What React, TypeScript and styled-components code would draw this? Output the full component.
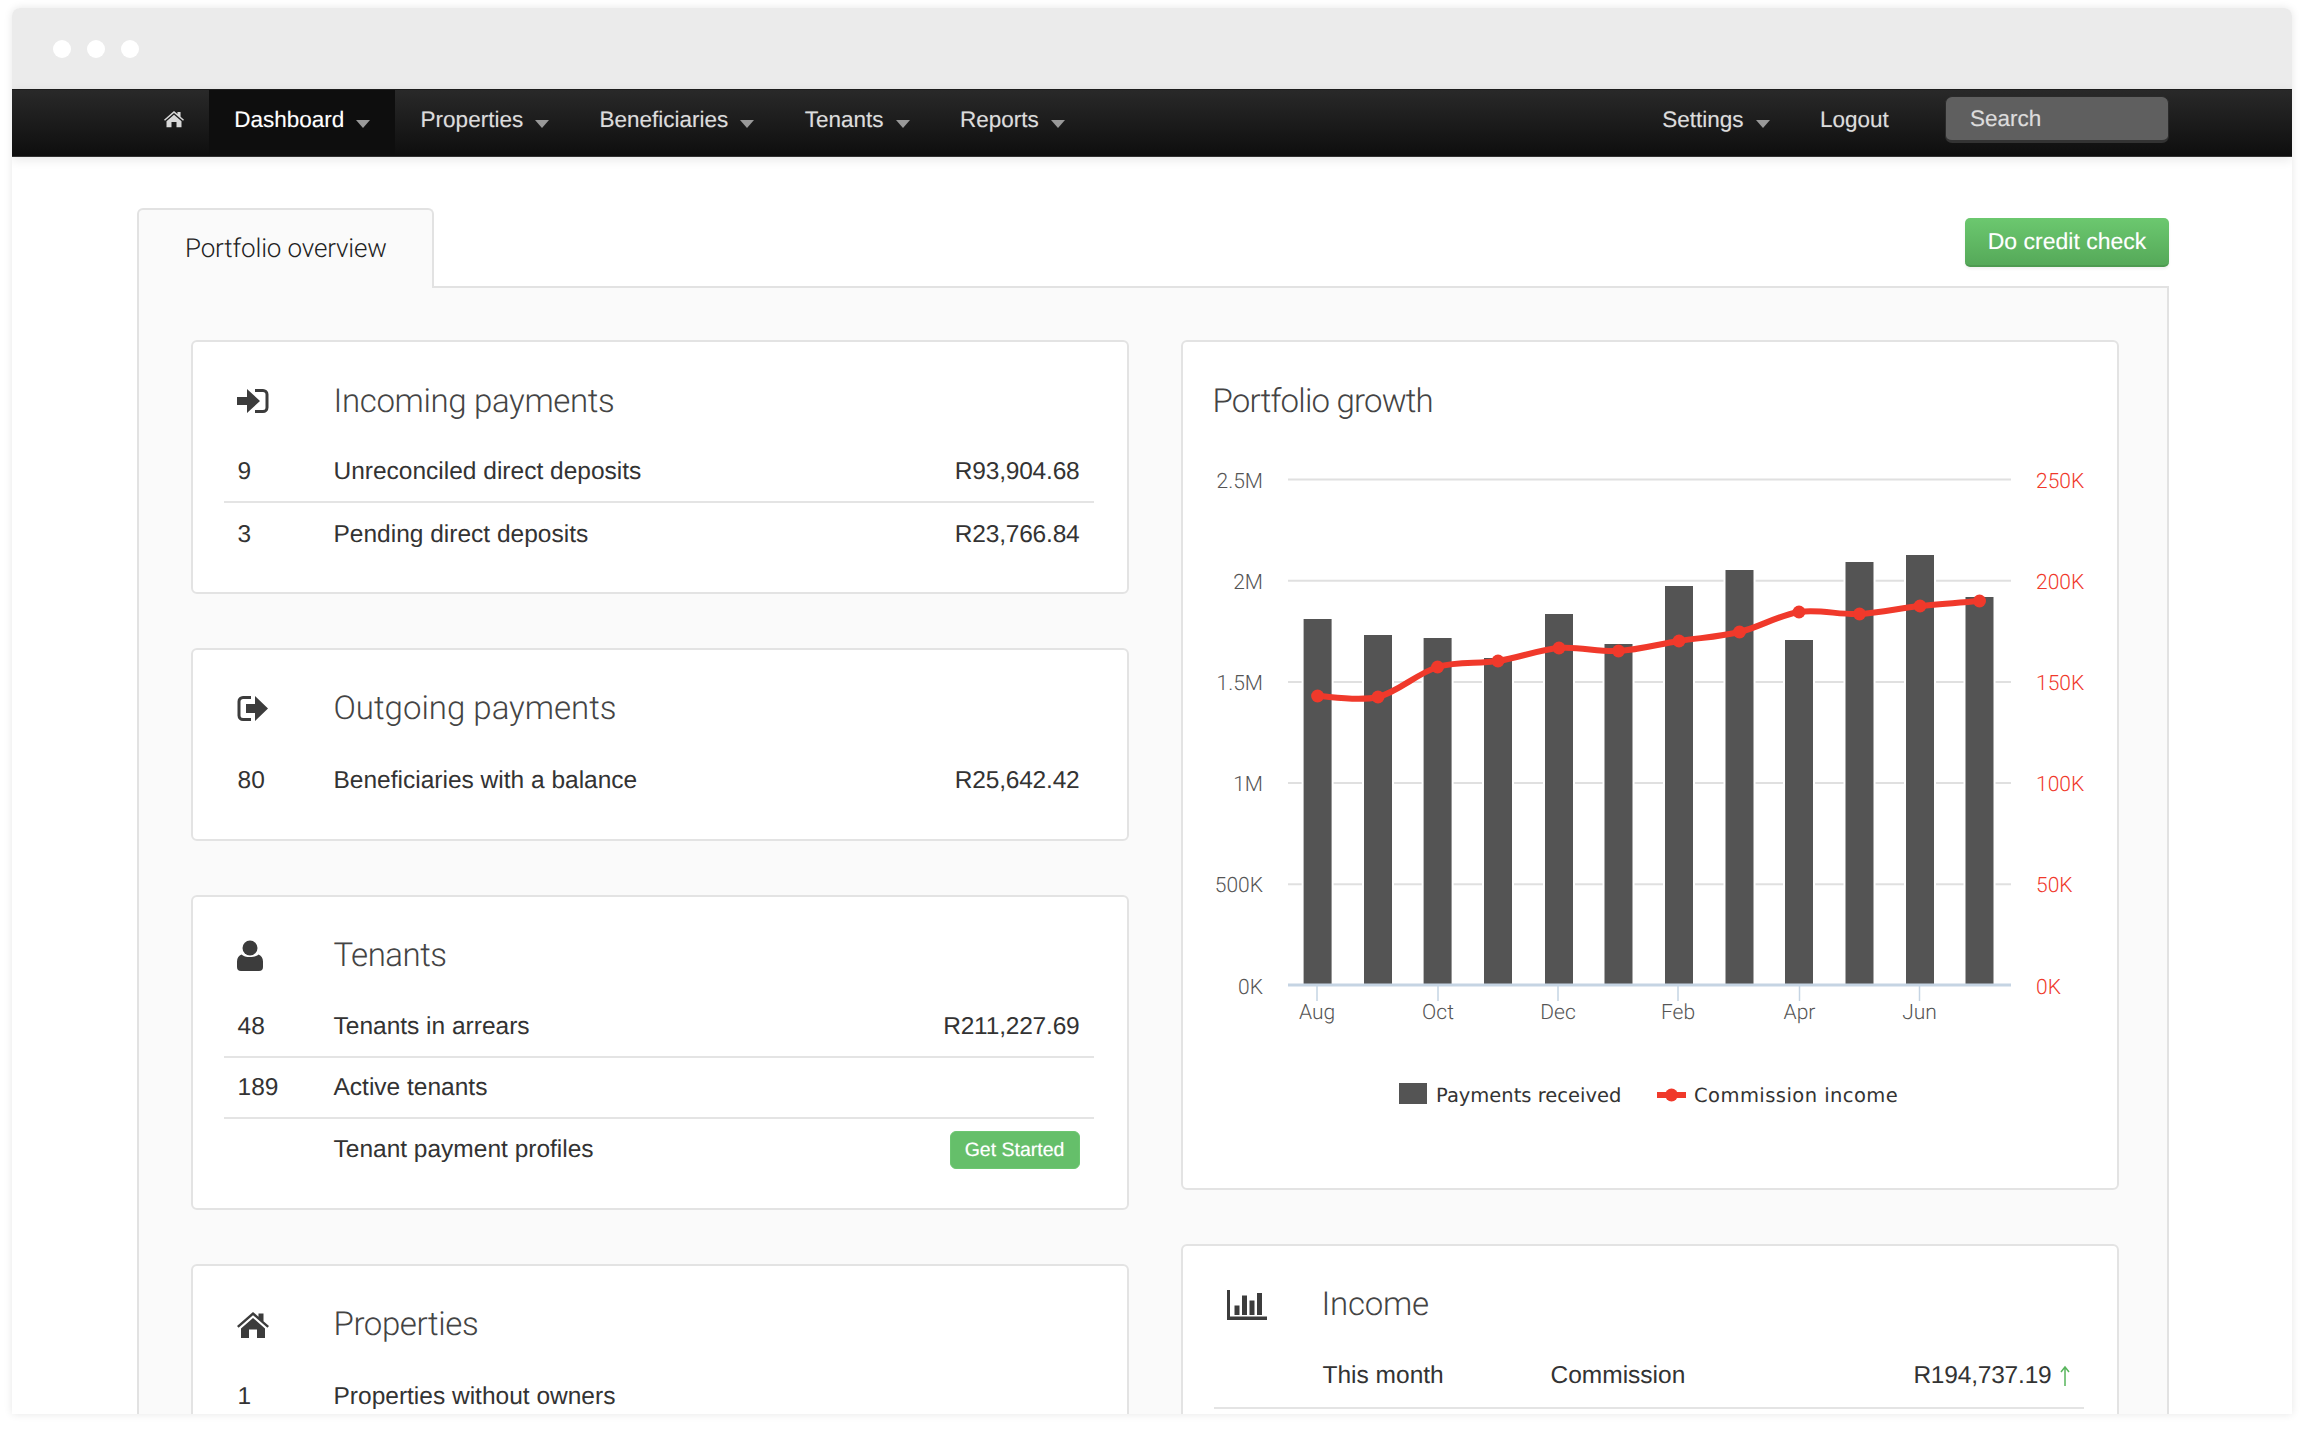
import React from "react";
import styled, { createGlobalStyle } from "styled-components";

const Global = createGlobalStyle`
  html, body { margin: 0; padding: 0; background: #fff; }
  body {
    font-family: "Liberation Sans", Arial, sans-serif;
    color: #333;
    text-rendering: geometricPrecision;
  }
  * { box-sizing: border-box; }
`;

const Page = styled.div`
  width: 2304px;
  height: 1430px;
  padding: 8px 12px 0;
  overflow: hidden;
`;
const Window = styled.div`
  width: 2280px;
  height: 1406px;
  border-radius: 8px 8px 0 0;
  overflow: hidden;
  background: #fff;
  box-shadow: 0 0 9px rgba(0, 0, 0, 0.1);
  display: flex;
  flex-direction: column;
`;
const TitleBar = styled.div`
  height: 81px;
  flex: none;
  background: #ebebeb;
  display: flex;
  align-items: center;
  gap: 16px;
  padding-left: 41px;
`;
const Dot = styled.span`
  width: 18px;
  height: 18px;
  border-radius: 50%;
  background: #fff;
`;
const NavBar = styled.nav`
  height: 68px;
  flex: none;
  display: flex;
  align-items: stretch;
  padding: 0 123px 0 126.6px;
  background: linear-gradient(#292929, #0e0e0e);
  border-top: 1px solid #1c1c1c;
  border-bottom: 1px solid #333;
  box-shadow: 0 3px 10px rgba(0, 0, 0, 0.09);
  position: relative;
  z-index: 2;
`;
const NavItem = styled.a<{ $active?: boolean }>`
  display: flex;
  align-items: center;
  padding: 0 25.2px 7px;
  font-size: 22.5px;
  white-space: nowrap;
  color: ${(p) => (p.$active ? "#fff" : "#dcdcdc")};
  background: ${(p) => (p.$active ? "#0e0e0e" : "transparent")};
  text-shadow: 0 0 1px rgba(255, 255, 255, 0.3);
`;
const Caret = styled.span`
  width: 0;
  height: 0;
  margin: 8px 0 0 12px;
  border-left: 7px solid transparent;
  border-right: 7px solid transparent;
  border-top: 8px solid #999;
`;
const NavSpacer = styled.div`
  flex: 1;
`;
const SearchBox = styled.div`
  width: 224px;
  height: 47px;
  margin: 6px 0 0 31px;
  padding: 0 0 0 24px;
  display: flex;
  align-items: center;
  font-size: 22.5px;
  color: #dcdcdc;
  text-shadow: 0 0 1px rgba(255, 255, 255, 0.3);
  background: #5f5f5f;
  border: 1px solid #2a2a2a;
  border-bottom: 3px solid #333;
  border-radius: 7px;
`;
const Content = styled.main`
  flex: 1;
  display: flex;
  flex-direction: column;
  padding: 0 123px 0 125px;
  min-height: 0;
`;
const TabRow = styled.div`
  flex: none;
  display: flex;
  justify-content: space-between;
  align-items: flex-start;
  padding-top: 51px;
  height: 129px;
`;
const Tab = styled.div`
  width: 297px;
  height: 80px;
  padding-left: 46px;
  display: flex;
  align-items: center;
  font-family: Roboto, "Liberation Sans", sans-serif;
  font-weight: 300;
  font-size: 26px;
  letter-spacing: -0.15px;
  color: #222;
  background: #fafafa;
  border: 2px solid #e2e2e2;
  border-bottom: none;
  border-radius: 6px 6px 0 0;
  position: relative;
  z-index: 1;
`;
const PrimaryButton = styled.button`
  width: 204px;
  height: 49px;
  margin-top: 10px;
  padding: 0 0 1px;
  font: 23px "Liberation Sans", Arial, sans-serif;
  text-rendering: geometricPrecision;
  text-shadow: 0 0 1px rgba(255, 255, 255, 0.3);
  color: #fff;
  background: linear-gradient(#6cc86f, #55a959);
  border: none;
  border-bottom: 2px solid #4d9a50;
  border-radius: 5px;
  box-shadow: 0 2px 3px rgba(0, 0, 0, 0.06);
`;
const Panel = styled.section`
  flex: 1;
  display: grid;
  grid-template-columns: 938px 938px;
  column-gap: 52px;
  align-items: start;
  padding: 52px 0 0 51.5px;
  background: #fafafa;
  border: 2px solid #e2e2e2;
  border-bottom: none;
  min-height: 0;
  overflow: hidden;
`;
const Column = styled.div`
  display: flex;
  flex-direction: column;
  gap: 53.5px;
`;
const Card = styled.article`
  background: #fff;
  border: 2px solid #e3e3e3;
  border-radius: 6px;
  padding: 32px 33px 28px 31px;
`;
const ChartCard = styled(Card)`
  padding: 32px 0 0;
`;
const CardHead = styled.header`
  display: flex;
  align-items: center;
  height: 54px;
  margin-bottom: 14px;
  padding-left: 13px;
`;
const IconSlot = styled.div<{ $width?: number }>`
  width: ${(p) => p.$width ?? 97}px;
  flex: none;
  display: flex;
  align-items: center;
`;
const Heading = styled.h2<{ $tracking?: number }>`
  margin: 0;
  font-family: Roboto, "Liberation Sans", sans-serif;
  font-weight: 300;
  font-size: 33px;
  letter-spacing: ${(p) => p.$tracking ?? -0.25}px;
  color: #444;
`;
const Row = styled.div`
  display: flex;
  align-items: center;
  height: 61.2px;
  padding: 1.5px 14px 0;
  font-size: 24.5px;
  color: #333;
  border-bottom: 2px solid #e4e4e4;
  &:last-child {
    border-bottom: none;
  }
`;
const Count = styled.span`
  width: 96px;
  flex: none;
`;
const Label = styled.span`
  flex: 1;
`;
const Amount = styled.span`
  letter-spacing: -0.2px;
`;
const SmallButton = styled.button`
  width: 130px;
  height: 38px;
  padding: 0;
  font: 19.5px "Liberation Sans", Arial, sans-serif;
  text-rendering: geometricPrecision;
  text-shadow: 0 0 1px rgba(255, 255, 255, 0.5);
  color: #fff;
  background: #65bf6a;
  border: 1px solid #6cc671;
  border-radius: 6px;
`;
const ChartHead = styled(CardHead)`
  padding-left: 30px;
`;
const ChartSvg = styled.svg`
  display: block;
`;
const AxisLabel = styled.text<{ $accent?: boolean }>`
  font-family: Roboto, "Liberation Sans", sans-serif;
  font-weight: 300;
  font-size: 21px;
  fill: ${(p) => (p.$accent ? "#f0392b" : "#555")};
`;
const LegendText = styled.text<{ $spacing?: number }>`
  font-family: "DejaVu Sans", sans-serif;
  font-size: 19.5px;
  letter-spacing: ${(p) => p.$spacing ?? 0}px;
  fill: #333;
`;
const IncomeCard = styled(Card)`
  height: 400px;
`;
const IncomeRow = styled.div`
  display: flex;
  align-items: center;
  height: 63px;
  padding: 0 14px 0 109px;
  font-size: 24.5px;
  color: #333;
  border-bottom: 2px solid #e4e4e4;
`;
const Period = styled.span`
  width: 228px;
  flex: none;
`;
const TrendArrow = styled.svg`
  margin-left: 8px;
`;

const SignIn = () => (
  <svg width="32" height="24" viewBox="0 0 32 24" fill="#3c3c3c">
    <path d="M0 8h10V0l13 12-13 12v-8H0z" />
    <path d="M18 1.5h8a4 4 0 0 1 4 4v13a4 4 0 0 1-4 4h-8" fill="none" stroke="#3c3c3c" strokeWidth="3" />
  </svg>
);
const SignOut = () => (
  <svg width="32" height="25" viewBox="0 0 32 25" fill="#3c3c3c">
    <path d="M14 1.5H6a4 4 0 0 0-4 4v14a4 4 0 0 0 4 4h8" fill="none" stroke="#3c3c3c" strokeWidth="3" />
    <path d="M9 8h9V0l13 12.5L18 25v-8H9z" />
  </svg>
);
const Person = () => (
  <svg width="26" height="31" viewBox="0 0 26 31" fill="#3c3c3c">
    <circle cx="13" cy="8" r="7.5" />
    <path d="M4.5 14.5c3 3.4 14 3.4 17 0 2.5 1 4.5 3.5 4.5 7V27a4 4 0 0 1-4 4H4a4 4 0 0 1-4-4v-5.500c0-3.500 2-6 4.500-7z" />
  </svg>
);
const House = ({ size = 32, color = "#3c3c3c" }: { size?: number; color?: string }) => (
  <svg width={size} height={(size * 26) / 32} viewBox="0 0 32 26" fill={color}>
    <path d="M16 0 21.5 4.8V1.500H26.5V9.2L32 14l-1.600 1.700L16 3.200 1.600 15.700 0 14z" />
    <path d="M16 6 28 16.400V26H20V17.500H12V26H4V16.400z" />
  </svg>
);
const Bars = () => (
  <svg width="40" height="30" viewBox="0 0 40 30" fill="#3c3c3c">
    <path d="M0 0h3v26.500h37V30H0z" />
    <path d="M7.500 15.500h5V25h-5zM15 5.500h5V25h-5zM22.500 10.500h5V25h-5zM30 3h5v22h-5z" />
  </svg>
);

const barX = [1317.6, 1378, 1437.6, 1498, 1559, 1618.5, 1679, 1739.5, 1799, 1859.5, 1920, 1979.5];
const barTop = [619, 635, 638, 658, 614, 644, 586, 570, 640, 562, 555, 597];
const lineY = [696, 697, 667, 661, 648, 651, 641, 632, 612, 614, 606, 601];
const leftTicks = ["2.5M", "2M", "1.5M", "1M", "500K", "0K"];
const rightTicks = ["250K", "200K", "150K", "100K", "50K", "0K"];
const months: [string, number][] = [["Aug", 1317], ["Oct", 1438], ["Dec", 1558], ["Feb", 1678], ["Apr", 1799.5], ["Jun", 1919.5]];
const gridY = (i: number) => 479.5 + i * 101.2;

function spline(xs: number[], ys: number[]): string {
  let d = `M${xs[0]} ${ys[0]}`;
  for (let i = 0; i < xs.length - 1; i++) {
    const x0 = xs[Math.max(i - 1, 0)], y0 = ys[Math.max(i - 1, 0)];
    const x3 = xs[Math.min(i + 2, xs.length - 1)], y3 = ys[Math.min(i + 2, xs.length - 1)];
    const c1x = xs[i] + (xs[i + 1] - x0) / 6, c1y = ys[i] + (ys[i + 1] - y0) / 6;
    const c2x = xs[i + 1] - (x3 - xs[i]) / 6, c2y = ys[i + 1] - (y3 - ys[i]) / 6;
    d += ` C${c1x} ${c1y} ${c2x} ${c2y} ${xs[i + 1]} ${ys[i + 1]}`;
  }
  return d;
}

const GrowthChart = () => (
  <ChartSvg width="934" height="746" viewBox="1183 442 934 746">
    {leftTicks.slice(0, 5).map((_, i) => (
      <line key={i} x1="1288" x2="2011" y1={gridY(i)} y2={gridY(i)} stroke="#e0e0e0" strokeWidth="2" />
    ))}
    {barX.map((x, i) => (
      <g key={i}>
        <rect x={x - 16} y={barTop[i] - 2} width="32" height={985 - barTop[i] + 2} fill="#fff" />
        <rect x={x - 14} y={barTop[i]} width="28" height={985 - barTop[i]} fill="#545454" />
      </g>
    ))}
    <line x1="1288" x2="2011" y1="985" y2="985" stroke="#c5d4e3" strokeWidth="3" />
    {months.map(([m, x]) => (
      <g key={m}>
        <line x1={x} x2={x} y1="985" y2="1001" stroke="#c5d4e3" strokeWidth="1.5" />
        <AxisLabel x={x} y="1019" textAnchor="middle">{m}</AxisLabel>
      </g>
    ))}
    {leftTicks.map((t, i) => (
      <AxisLabel key={t} x="1263" y={gridY(i) + 8} textAnchor="end">{t}</AxisLabel>
    ))}
    {rightTicks.map((t, i) => (
      <AxisLabel key={t + "r"} $accent x="2036" y={gridY(i) + 8}>{t}</AxisLabel>
    ))}
    <path d={spline(barX, lineY)} fill="none" stroke="#f0392b" strokeWidth="6" strokeLinejoin="round" />
    {barX.map((x, i) => (
      <circle key={i} cx={x} cy={lineY[i]} r="6.5" fill="#f0392b" />
    ))}
    <rect x="1399" y="1083" width="28" height="21" fill="#545454" />
    <LegendText x="1436" y="1102">Payments received</LegendText>
    <line x1="1657" x2="1686" y1="1095" y2="1095" stroke="#f0392b" strokeWidth="6" />
    <circle cx="1671.5" cy="1095" r="6.5" fill="#f0392b" />
    <LegendText $spacing={0.45} x="1694" y="1102">Commission income</LegendText>
  </ChartSvg>
);

type RowData = { count?: string; label: string; amount?: string; action?: string };
const StatCard = ({ icon, title, rows, tracking }: { icon: React.ReactNode; title: string; rows: RowData[]; tracking?: number }) => (
  <Card>
    <CardHead>
      <IconSlot>{icon}</IconSlot>
      <Heading $tracking={tracking}>{title}</Heading>
    </CardHead>
    {rows.map((r) => (
      <Row key={r.label}>
        <Count>{r.count}</Count>
        <Label>{r.label}</Label>
        {r.amount && <Amount>{r.amount}</Amount>}
        {r.action && <SmallButton>{r.action}</SmallButton>}
      </Row>
    ))}
  </Card>
);

export default function App() {
  return (
    <Page>
      <Global />
      <Window>
        <TitleBar>
          <Dot />
          <Dot />
          <Dot />
        </TitleBar>
        <NavBar>
          <NavItem><House size={20} color="#d8d8d8" /></NavItem>
          <NavItem $active>Dashboard<Caret /></NavItem>
          <NavItem>Properties<Caret /></NavItem>
          <NavItem>Beneficiaries<Caret /></NavItem>
          <NavItem>Tenants<Caret /></NavItem>
          <NavItem>Reports<Caret /></NavItem>
          <NavSpacer />
          <NavItem>Settings<Caret /></NavItem>
          <NavItem>Logout</NavItem>
          <SearchBox>Search</SearchBox>
        </NavBar>
        <Content>
          <TabRow>
            <Tab>Portfolio overview</Tab>
            <PrimaryButton>Do credit check</PrimaryButton>
          </TabRow>
          <Panel>
            <Column>
              <StatCard
                icon={<SignIn />}
                title="Incoming payments"
                tracking={-0.35}
                rows={[
                  { count: "9", label: "Unreconciled direct deposits", amount: "R93,904.68" },
                  { count: "3", label: "Pending direct deposits", amount: "R23,766.84" },
                ]}
              />
              <StatCard
                icon={<SignOut />}
                title="Outgoing payments"
                tracking={0}
                rows={[{ count: "80", label: "Beneficiaries with a balance", amount: "R25,642.42" }]}
              />
              <StatCard
                icon={<Person />}
                title="Tenants"
                tracking={-0.5}
                rows={[
                  { count: "48", label: "Tenants in arrears", amount: "R211,227.69" },
                  { count: "189", label: "Active tenants" },
                  { label: "Tenant payment profiles", action: "Get Started" },
                ]}
              />
              <StatCard
                icon={<House />}
                title="Properties"
                tracking={-0.4}
                rows={[{ count: "1", label: "Properties without owners" }]}
              />
            </Column>
            <Column>
              <ChartCard>
                <ChartHead>
                  <Heading $tracking={-0.8}>Portfolio growth</Heading>
                </ChartHead>
                <GrowthChart />
              </ChartCard>
              <IncomeCard>
                <CardHead>
                  <IconSlot $width={95}><Bars /></IconSlot>
                  <Heading>Income</Heading>
                </CardHead>
                <IncomeRow>
                  <Period>This month</Period>
                  <Label>Commission</Label>
                  <Amount>R194,737.19</Amount>
                  <TrendArrow width="10" height="22" viewBox="0 0 10 22">
                    <path d="M5 21V2M1 7l4-5 4 5" fill="none" stroke="#58b55c" strokeWidth="1.5" />
                  </TrendArrow>
                </IncomeRow>
              </IncomeCard>
            </Column>
          </Panel>
        </Content>
      </Window>
    </Page>
  );
}
